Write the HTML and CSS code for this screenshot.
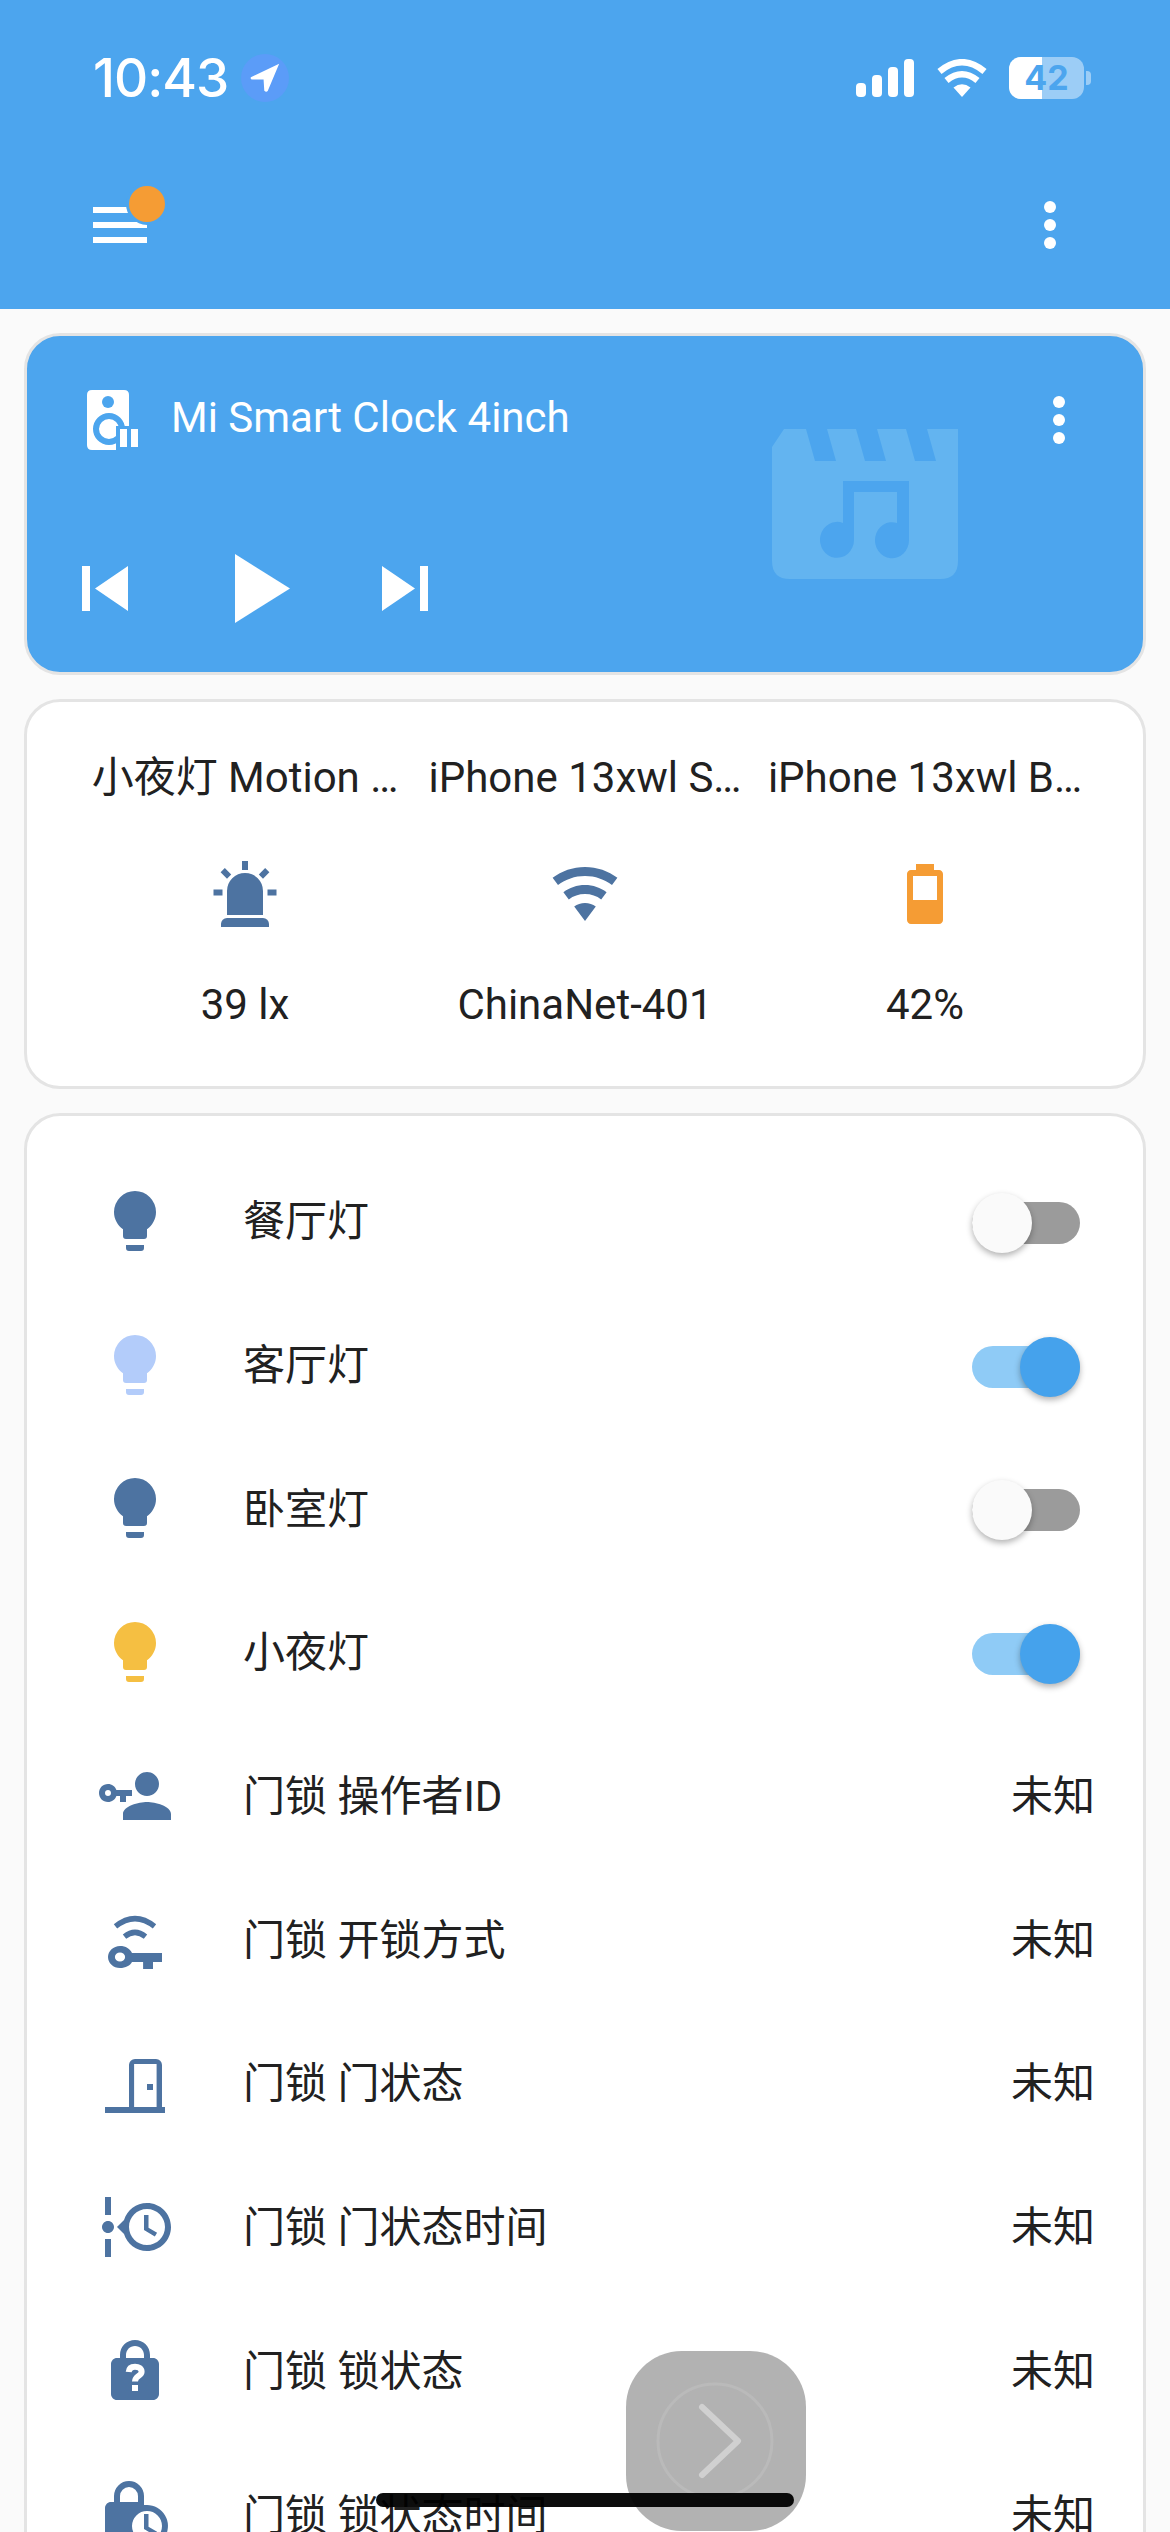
FILE: index.html
```html
<!DOCTYPE html>
<html lang="zh">
<head>
    <meta charset="UTF-8">
    <meta name="viewport" content="width=device-width, initial-scale=1.0">
    <title>Home Assistant</title>
    <link rel="stylesheet" href="styles.css">
</head>
<body>

    <!-- Header with status bar and toolbar -->
    <header class="header">
        <div class="status-bar">
            <div class="status-left">
                <span class="clock">10:43</span>
                <span class="location">
                    <svg viewBox="0 0 24 24" width="34" height="34"><path d="M22 2 L2 11.5 Q1.5 13 3 13 L11 13 L11.5 21 Q13 22.5 14 21 Z" fill="#fff"/></svg>
                </span>
            </div>
            <div class="status-right">
                <div class="signal">
                    <span class="bar bar-1"></span>
                    <span class="bar bar-2"></span>
                    <span class="bar bar-3"></span>
                    <span class="bar bar-4"></span>
                </div>
                <svg class="status-wifi" viewBox="0 0 50 38" width="50" height="38">
                    <path d="M25 38 L16.5 28.5 Q25 22 33.5 28.5 Z" fill="#fff"/>
                    <path d="M9.5 21.5 Q25 9 40.5 21.5" fill="none" stroke="#fff" stroke-width="6.5"/>
                    <path d="M2.5 12.5 Q25 -6 47.5 12.5" fill="none" stroke="#fff" stroke-width="6.5"/>
                </svg>
                <div class="battery">
                    <div class="battery-fill"></div>
                    <span class="battery-num">42</span>
                </div>
                <span class="battery-tip"></span>
            </div>
        </div>
        <div class="toolbar">
            <div class="menu-btn">
                <span class="menu-line"></span>
                <span class="menu-line"></span>
                <span class="menu-line"></span>
                <span class="menu-badge"></span>
            </div>
            <div class="dots toolbar-dots">
                <span></span><span></span><span></span>
            </div>
        </div>
    </header>

    <main class="content">

        <!-- Media player -->
        <section class="card media-card">
            <svg class="media-art" viewBox="0 0 186 150" width="186" height="150">
                <path fill-rule="evenodd" fill="#63b4f0" d="M12 0H186V132Q186 150 168 150H18Q0 150 0 132V18Z M34 0L43 32H64L55 0Z M84 0L93 32H114L105 0Z M134 0L143 32H164L155 0Z M71 52V94A17 18 0 1 0 82 111V63H125V94A17 18 0 1 0 137 111V52Z"/>
            </svg>
            <div class="media-top">
                <svg class="media-icon" viewBox="0 0 51 60" width="51" height="60">
                    <path fill="#fff" d="M5 0H37Q42 0 42 5V60H5Q0 60 0 55V5Q0 0 5 0Z"/>
                    <circle cx="21" cy="12" r="6" fill="#4ca5ee"/>
                    <circle cx="22" cy="39" r="13" fill="none" stroke="#4ca5ee" stroke-width="6"/>
                    <rect x="29" y="36" width="22" height="24" fill="#4ca5ee"/>
                    <rect x="33" y="39" width="7" height="18" fill="#fff"/>
                    <rect x="44" y="39" width="7" height="18" fill="#fff"/>
                </svg>
                <span class="media-title">Mi Smart Clock 4inch</span>
                <div class="dots media-dots">
                    <span></span><span></span><span></span>
                </div>
            </div>
            <div class="media-controls">
                <svg viewBox="0 0 46 45" width="46" height="45"><path fill="#fff" d="M0 0H8V45H0Z M46 0V45L13 22.5Z"/></svg>
                <svg class="media-play" viewBox="0 0 55 69" width="55" height="69"><path fill="#fff" d="M0 0L55 34.5L0 69Z"/></svg>
                <svg viewBox="0 0 46 45" width="46" height="45"><path fill="#fff" d="M38 0H46V45H38Z M0 0V45L33 22.5Z"/></svg>
            </div>
        </section>

        <!-- Glance -->
        <section class="card glance-card">
            <div class="glance-item">
                <div class="glance-name">小夜灯 Motion …</div>
                <svg class="icon" viewBox="0 0 24 24"><path d="M6,6.9L3.87,4.78L5.28,3.37L7.4,5.5L6,6.9M13,1V4H11V1H13M20.13,4.78L18,6.9L16.6,5.5L18.72,3.37L20.13,4.78M4.5,10.5V12.5H1.5V10.5H4.5M19.5,10.5H22.5V12.5H19.5V10.5M6,20H18A2,2 0 0,1 20,22V23H4V22A2,2 0 0,1 6,20M12,5A6,6 0 0,1 18,11V19H6V11A6,6 0 0,1 12,5Z"/></svg>
                <div class="glance-value">39 lx</div>
            </div>
            <div class="glance-item">
                <div class="glance-name">iPhone 13xwl S…</div>
                <svg class="icon" viewBox="0 0 24 24"><path d="M12,21L15.6,16.2C14.6,15.45 13.35,15 12,15C10.65,15 9.4,15.45 8.4,16.2L12,21M12,3C7.95,3 4.21,4.34 1.2,6.6L3,9C5.5,7.12 8.62,6 12,6C15.38,6 18.5,7.12 21,9L22.8,6.6C19.79,4.34 16.05,3 12,3M12,9C9.3,9 6.81,9.89 4.8,11.4L6.6,13.8C8.1,12.67 9.97,12 12,12C14.03,12 15.9,12.67 17.4,13.8L19.2,11.4C17.19,9.89 14.7,9 12,9Z"/></svg>
                <div class="glance-value">ChinaNet-401</div>
            </div>
            <div class="glance-item">
                <div class="glance-name">iPhone 13xwl B…</div>
                <svg class="icon icon-orange" viewBox="0 0 24 24"><path d="M16 14H8V6H16M16.67 4H15V2H9V4H7.33C6.6 4 6 4.6 6 5.33V20.67C6 21.4 6.6 22 7.33 22H16.67C17.41 22 18 21.41 18 20.67V5.33C18 4.6 17.4 4 16.67 4Z"/></svg>
                <div class="glance-value">42%</div>
            </div>
        </section>

        <!-- Entities -->
        <section class="card entities-card">
            <div class="row">
                <svg class="icon" viewBox="0 0 24 24"><path d="M12,2A7,7 0 0,0 5,9C5,11.38 6.19,13.47 8,14.74V17A1,1 0 0,0 9,18H15A1,1 0 0,0 16,17V14.74C17.81,13.47 19,11.38 19,9A7,7 0 0,0 12,2M9,21A1,1 0 0,0 10,22H14A1,1 0 0,0 15,21V20H9V21Z"/></svg>
                <span class="row-name">餐厅灯</span>
                <span class="switch"><span class="knob"></span></span>
            </div>
            <div class="row">
                <svg class="icon icon-soft" viewBox="0 0 24 24"><path d="M12,2A7,7 0 0,0 5,9C5,11.38 6.19,13.47 8,14.74V17A1,1 0 0,0 9,18H15A1,1 0 0,0 16,17V14.74C17.81,13.47 19,11.38 19,9A7,7 0 0,0 12,2M9,21A1,1 0 0,0 10,22H14A1,1 0 0,0 15,21V20H9V21Z"/></svg>
                <span class="row-name">客厅灯</span>
                <span class="switch on"><span class="knob"></span></span>
            </div>
            <div class="row">
                <svg class="icon" viewBox="0 0 24 24"><path d="M12,2A7,7 0 0,0 5,9C5,11.38 6.19,13.47 8,14.74V17A1,1 0 0,0 9,18H15A1,1 0 0,0 16,17V14.74C17.81,13.47 19,11.38 19,9A7,7 0 0,0 12,2M9,21A1,1 0 0,0 10,22H14A1,1 0 0,0 15,21V20H9V21Z"/></svg>
                <span class="row-name">卧室灯</span>
                <span class="switch"><span class="knob"></span></span>
            </div>
            <div class="row">
                <svg class="icon icon-yellow" viewBox="0 0 24 24"><path d="M12,2A7,7 0 0,0 5,9C5,11.38 6.19,13.47 8,14.74V17A1,1 0 0,0 9,18H15A1,1 0 0,0 16,17V14.74C17.81,13.47 19,11.38 19,9A7,7 0 0,0 12,2M9,21A1,1 0 0,0 10,22H14A1,1 0 0,0 15,21V20H9V21Z"/></svg>
                <span class="row-name">小夜灯</span>
                <span class="switch on"><span class="knob"></span></span>
            </div>
            <div class="row">
                <svg class="icon" viewBox="0 0 24 24"><path d="M11 10V12H9V14H7V12H5.8C5.4 13.2 4.3 14 3 14C1.3 14 0 12.7 0 11S1.3 8 3 8C4.3 8 5.4 8.8 5.8 10H11M3 10C2.4 10 2 10.4 2 11S2.4 12 3 12 4 11.6 4 11 3.6 10 3 10M16 14C18.7 14 24 15.3 24 18V20H8V18C8 15.3 13.3 14 16 14M16 12C13.8 12 12 10.2 12 8S13.8 4 16 4 20 5.8 20 8 18.2 12 16 12Z"/></svg>
                <span class="row-name">门锁 操作者ID</span>
                <span class="row-value">未知</span>
            </div>
            <div class="row">
                <svg class="icon" viewBox="0 0 24 24">
                    <path fill-rule="evenodd" d="M7 14.3C8.9 14.3 10.4 15.2 11 16.7H21V19.7H18V22H14.7V19.7H11C10.4 20.9 8.9 21.7 7 21.7C4.8 21.7 3 20 3 18S4.8 14.3 7 14.3M7 16.5A1.7 1.5 0 1 0 7 19.5A1.7 1.5 0 1 0 7 16.5Z"/>
                    <path class="arc" d="M5.5 7.8Q12 2.6 18.5 7.8"/>
                    <path class="arc" d="M8.5 11.2Q12 8.4 15.5 11.2"/>
                </svg>
                <span class="row-name">门锁 开锁方式</span>
                <span class="row-value">未知</span>
            </div>
            <div class="row">
                <svg class="icon" viewBox="0 0 24 24"><path fill-rule="evenodd" d="M2 20H10V6A2 2 0 0 1 12 4H19A2 2 0 0 1 21 6V20H22V22H2V20Z M11.7 5.7V20H19.2V5.7H11.7Z M16 12.3H18V14.3H16Z"/></svg>
                <span class="row-name">门锁 门状态</span>
                <span class="row-value">未知</span>
            </div>
            <div class="row">
                <svg class="icon" viewBox="0 0 24 24"><path d="M4 2V8H2V2H4M2 22V16H4V22H2M5 12C5 13.11 4.11 14 3 14C1.9 14 1 13.1 1 12C1 10.89 1.9 10 3 10C4.11 10 5 10.9 5 12M16 4C20.42 4 24 7.58 24 12C24 16.42 20.42 20 16 20C12.39 20 9.34 17.61 8.34 14.33L6 12L8.34 9.67C9.34 6.39 12.39 4 16 4M16 6C12.69 6 10 8.69 10 12C10 15.31 12.69 18 16 18C19.31 18 22 15.31 22 12C22 8.69 19.31 6 16 6M15 8H16.5V12.25L19.36 13.94L18.61 15.16L15 13V8Z"/></svg>
                <span class="row-name">门锁 门状态时间</span>
                <span class="row-value">未知</span>
            </div>
            <div class="row">
                <svg class="icon" viewBox="0 0 24 24">
                    <path d="M12 2C9.2 2 7 4.2 7 7V8H6C4.9 8 4 8.9 4 10V20C4 21.1 4.9 22 6 22H18C19.1 22 20 21.1 20 20V10C20 8.9 19.1 8 18 8H17V7C17 4.2 14.8 2 12 2M12 4C13.7 4 15 5.3 15 7V8H9V7C9 5.3 10.3 4 12 4Z"/>
                    <path class="lock-q" d="M9.9 12.7C10 11.4 10.9 10.9 12 10.9C13.2 10.9 14.2 11.5 14.2 12.6C14.2 14 12 14 12 15.8"/>
                    <rect x="11" y="17" width="2" height="2" fill="#fff"/>
                </svg>
                <span class="row-name">门锁 锁状态</span>
                <span class="row-value">未知</span>
            </div>
            <div class="row">
                <svg class="icon" viewBox="0 0 24 24"><path fill-rule="evenodd" d="M10 1A5 5 0 0 0 5 6V8H4C2.9 8 2 8.9 2 10V18C2 19.1 2.9 20 4 20H10.24A7 7 0 1 0 16 9H15V6A5 5 0 0 0 10 1M10 3A3 3 0 0 1 13 6V8H7V6A3 3 0 0 1 10 3M16 11A5 5 0 1 1 16 21A5 5 0 1 1 16 11M15 12H16.5V16.25L19.36 17.94L18.61 19.16L15 17V12Z"/></svg>
                <span class="row-name">门锁 锁状态时间</span>
                <span class="row-value">未知</span>
            </div>
        </section>
    </main>

    <!-- Floating overlays -->
    <div class="float-btn">
        <svg viewBox="0 0 120 120" width="120" height="120">
            <circle cx="59" cy="60" r="57" fill="none" stroke="#bababa" stroke-width="3"/>
            <path d="M46 26L82 60L46 94" fill="none" stroke="#d0d0d0" stroke-width="6" stroke-linecap="round" stroke-linejoin="round"/>
        </svg>
    </div>
    <div class="home-indicator"></div>

</body>
</html>
```

FILE: styles.css
```css
* {
    box-sizing: border-box;
}
html, body {
    margin: 0;
    height: 2532px;
    overflow: hidden;
}
body {
    position: relative;
    font-family: Roboto, "Noto Sans CJK SC", sans-serif;
    font-size: 42px;
    color: #212121;
    background-color: #fafafa;
}

/* header */
.header {
    height: 309px;
    padding: 57px 79px 0 93px;
    background-color: #4ca5ee;
}
.status-bar {
    display: flex;
    justify-content: space-between;
    align-items: center;
    height: 42px;
}
.status-left {
    display: flex;
    align-items: center;
}
.clock {
    font-family: Inter, sans-serif;
    font-size: 53px;
    font-weight: 500;
    color: white;
    letter-spacing: -1px;
}
.location {
    display: flex;
    align-items: center;
    justify-content: center;
    width: 48px;
    height: 48px;
    margin-left: 13px;
    border-radius: 50%;
    background-color: #5b9cf8;
}
.status-right {
    display: flex;
    align-items: center;
}
.signal {
    display: flex;
    align-items: flex-end;
    gap: 6px;
    height: 38px;
    margin-right: 23px;
}
.bar {
    width: 10px;
    border-radius: 4px;
    background-color: white;
}
.bar-1 { height: 14px; }
.bar-2 { height: 22px; }
.bar-3 { height: 30px; }
.bar-4 { height: 38px; }
.battery {
    position: relative;
    width: 75px;
    height: 42px;
    margin-left: 22px;
    border-radius: 12px;
    background-color: rgba(255, 255, 255, 0.45);
    overflow: hidden;
}
.battery-fill {
    width: 33px;
    height: 100%;
    background-color: white;
}
.battery-num {
    position: absolute;
    top: 0;
    left: 0;
    width: 100%;
    font-family: Inter, sans-serif;
    font-size: 34px;
    font-weight: 700;
    line-height: 42px;
    text-align: center;
    color: #4ca5ee;
}
.battery-tip {
    width: 5px;
    height: 14px;
    margin-left: 2px;
    border-radius: 0 4px 4px 0;
    background-color: rgba(255, 255, 255, 0.45);
}
.toolbar {
    display: flex;
    justify-content: space-between;
    align-items: center;
    height: 54px;
    margin-top: 99px;
}
.menu-btn {
    position: relative;
    display: flex;
    flex-direction: column;
    gap: 9px;
    width: 54px;
}
.menu-line {
    height: 6px;
    background-color: white;
}
.menu-badge {
    position: absolute;
    top: -24px;
    left: 33px;
    width: 42px;
    height: 42px;
    border: 3px solid #4ca5ee;
    border-radius: 50%;
    background-color: #f59c34;
}
.dots {
    display: flex;
    flex-direction: column;
    gap: 6px;
    width: 12px;
}
.dots span {
    width: 12px;
    height: 12px;
    border-radius: 50%;
    background-color: white;
}
.toolbar-dots {
    margin-right: 35px;
}

/* cards */
.content {
    display: flex;
    flex-direction: column;
    gap: 24px;
    padding: 24px 24px 0;
}
.card {
    border: 3px solid #e4e4e4;
    border-radius: 36px;
    background-color: white;
}
.media-card {
    position: relative;
    height: 342px;
    padding: 54px 78px 0 56px;
    background-color: #4ca5ee;
    overflow: hidden;
}
.media-art {
    position: absolute;
    top: 93px;
    left: 745px;
}
.media-top {
    position: relative;
    display: flex;
    align-items: center;
    height: 60px;
}
.media-icon {
    margin-left: 4px;
}
.media-title {
    flex: 1;
    margin-left: 33px;
    margin-top: -6px;
    color: white;
}
.media-controls {
    position: relative;
    display: flex;
    align-items: center;
    gap: 92px;
    width: max-content;
    margin-top: 104px;
    margin-left: -1px;
}
.media-play {
    margin-left: 15px;
}
.glance-card {
    display: flex;
    justify-content: center;
    height: 390px;
    padding-top: 51px;
}
.glance-item {
    display: flex;
    flex-direction: column;
    align-items: center;
    width: 340px;
    text-align: center;
}
.glance-name {
    line-height: 50px;
    white-space: nowrap;
}
.glance-item .icon {
    margin-top: 55px;
}
.glance-value {
    margin-top: 50px;
    line-height: 50px;
}

/* entity rows */
.entities-card {
    padding: 33px 48px 0 72px;
    height: 1500px;
}
.row {
    display: flex;
    align-items: center;
    height: 143.7px;
}
.row-name {
    flex: 1;
    margin-left: 72px;
    margin-top: -6px;
}
.row-value {
    margin-top: -6px;
    text-align: right;
}
.icon {
    flex: none;
    width: 72px;
    height: 72px;
    fill: #4d73a1;
}
.icon-orange { fill: #f59c34; }
.icon-soft { fill: #b3ccfa; }
.icon-yellow { fill: #f5bf42; }
.arc {
    fill: none;
    stroke: #4d73a1;
    stroke-width: 1.8;
}
.lock-q {
    fill: none;
    stroke: white;
    stroke-width: 2;
}

/* toggle */
.switch {
    position: relative;
    width: 108px;
    height: 42px;
    margin-top: 4px;
    margin-right: 15px;
    border-radius: 21px;
    background-color: #9b9b9b;
}
.knob {
    position: absolute;
    top: -9px;
    left: 0;
    width: 60px;
    height: 60px;
    border-radius: 50%;
    background-color: #fafafa;
    box-shadow: 0 3px 6px rgba(0, 0, 0, 0.3);
}
.switch.on {
    background-color: #8fcbf6;
}
.switch.on .knob {
    left: 48px;
    background-color: #45a2ec;
}

/* overlays */
.float-btn {
    position: absolute;
    top: 2351px;
    left: 626px;
    display: flex;
    align-items: center;
    justify-content: center;
    width: 180px;
    height: 180px;
    border-radius: 56px;
    background-color: #b2b2b2;
}
.home-indicator {
    position: absolute;
    top: 2493px;
    left: 376px;
    width: 418px;
    height: 14px;
    border-radius: 7px;
    background-color: rgba(0, 0, 0, 0.95);
}
```
